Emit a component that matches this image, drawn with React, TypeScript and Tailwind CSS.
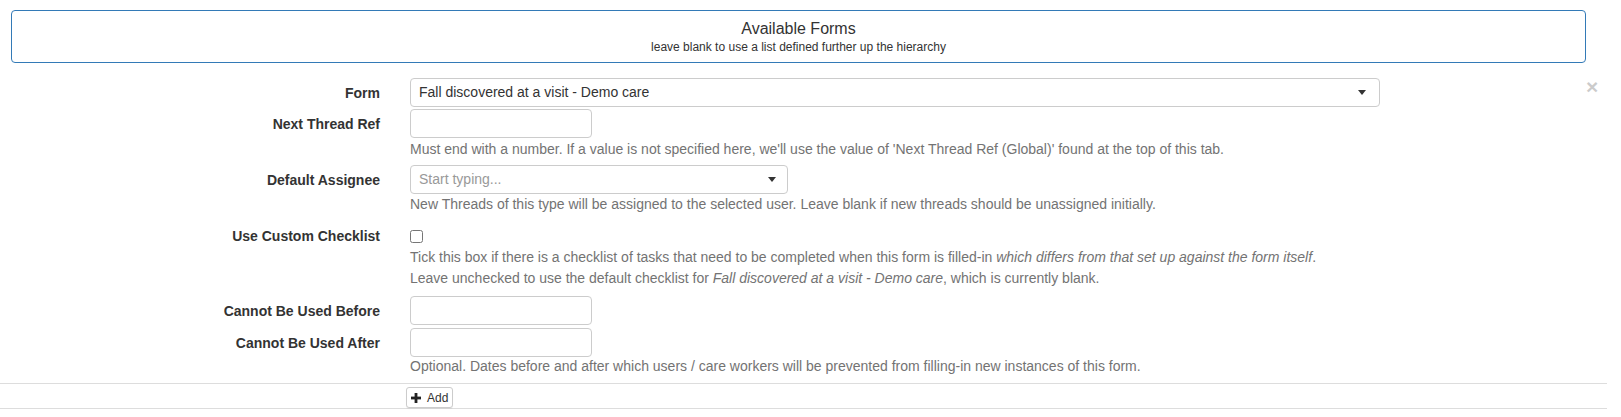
import React from "react";

function Caret() {
  return (
    <svg width="8" height="5" viewBox="0 0 8 5" className="block">
      <polygon points="0,0 8,0 4,5" fill="#333" />
    </svg>
  );
}

function PlusIcon() {
  return (
    <svg width="10" height="10" viewBox="0 0 10 10" className="block">
      <rect x="3.6" y="0" width="2.8" height="10" fill="#222" />
      <rect x="0" y="3.6" width="10" height="2.8" fill="#222" />
    </svg>
  );
}

function Label({ children }: { children: React.ReactNode }) {
  return (
    <div className="w-[380px] shrink-0 text-right font-bold text-[14px] leading-[20px] text-[#333]">
      {children}
    </div>
  );
}

function Help({ children }: { children: React.ReactNode }) {
  return <div className="ml-[410px] text-[14px] leading-[20px] text-[#737373]">{children}</div>;
}

export default function App() {
  return (
    <div className="w-[1621px] h-[417px] bg-white font-['Liberation_Sans',Arial,sans-serif] text-[14px] text-[#333]">
      <div className="w-[1607px]">
        {/* Header */}
        <div className="pt-[10px] pl-[11px]">
          <div className="w-[1575px] border border-[#337ab7] rounded-[4px] pt-[8px] pb-[7px] text-center">
            <div className="text-[16px] leading-[20px] text-[#333]">Available Forms</div>
            <div className="text-[12px] leading-[16px] text-[#333]">
              leave blank to use a list defined further up the hierarchy
            </div>
          </div>
        </div>

        {/* Row 1 */}
        <div className="flex border-b border-[#ddd]">
          <div className="w-[1586px] shrink-0 pt-[15px] pb-[7px]">
            {/* Form */}
            <div className="flex items-center">
              <Label>Form</Label>
              <div className="ml-[30px] w-[970px] h-[29px] border border-[#ccc] rounded-[4px] flex items-center justify-between pl-[8px] pr-[13px]">
                <span className="text-[14px] text-[#333]">Fall discovered at a visit - Demo care</span>
                <Caret />
              </div>
            </div>

            {/* Next Thread Ref */}
            <div className="flex items-center mt-[2px]">
              <Label>Next Thread Ref</Label>
              <div className="ml-[30px] w-[182px] h-[29px] border border-[#ccc] rounded-[4px]" />
            </div>
            <div className="mt-[1px]">
              <Help>
                Must end with a number. If a value is not specified here, we'll use the value of 'Next Thread Ref (Global)' found at the top of this tab.
              </Help>
            </div>

            {/* Default Assignee */}
            <div className="flex items-center mt-[6px]">
              <Label>Default Assignee</Label>
              <div className="ml-[30px] w-[378px] h-[29px] border border-[#ccc] rounded-[4px] flex items-center justify-between pl-[8px] pr-[11px]">
                <span className="text-[14px] text-[#999]">Start typing...</span>
                <Caret />
              </div>
            </div>
            <Help>
              New Threads of this type will be assigned to the selected user. Leave blank if new threads should be unassigned initially.
            </Help>

            {/* Use Custom Checklist */}
            <div className="flex items-center mt-[12px] h-[20px]">
              <Label>Use Custom Checklist</Label>
              <div className="ml-[30px] flex items-center">
                <input type="checkbox" className="w-[13px] h-[13px] m-0" readOnly />
              </div>
            </div>
            <div className="mt-[1px] ml-[410px] text-[14px] leading-[21px] text-[#737373]">
              <div>
                Tick this box if there is a checklist of tasks that need to be completed when this form is filled-in{" "}
                <em>which differs from that set up against the form itself</em>.
              </div>
              <div>
                Leave unchecked to use the default checklist for <em>Fall discovered at a visit - Demo care</em>, which is currently blank.
              </div>
            </div>

            {/* Cannot Be Used Before */}
            <div className="flex items-center mt-[7px]">
              <Label>Cannot Be Used Before</Label>
              <div className="ml-[30px] w-[182px] h-[29px] border border-[#ccc] rounded-[4px]" />
            </div>
            <div className="flex items-center mt-[3px]">
              <Label>Cannot Be Used After</Label>
              <div className="ml-[30px] w-[182px] h-[29px] border border-[#ccc] rounded-[4px]" />
            </div>
            <div className="-mt-[1px]">
              <Help>
                Optional. Dates before and after which users / care workers will be prevented from filling-in new instances of this form.
              </Help>
            </div>
          </div>
          <div className="pt-[13px]">
            <span className="block text-[21px] leading-[21px] font-bold text-black opacity-20">×</span>
          </div>
        </div>

        {/* Row 2 */}
        <div className="border-b border-[#ddd] pt-[3px] pl-[406px]">
          <button className="h-[21px] flex items-center gap-[6px] px-[4px] border border-[#ccc] rounded-[3px] bg-white text-[12px] text-[#333] shadow-[0_1px_1px_rgba(0,0,0,0.05)]">
            <PlusIcon />
            <span>Add</span>
          </button>
        </div>
      </div>
    </div>
  );
}
